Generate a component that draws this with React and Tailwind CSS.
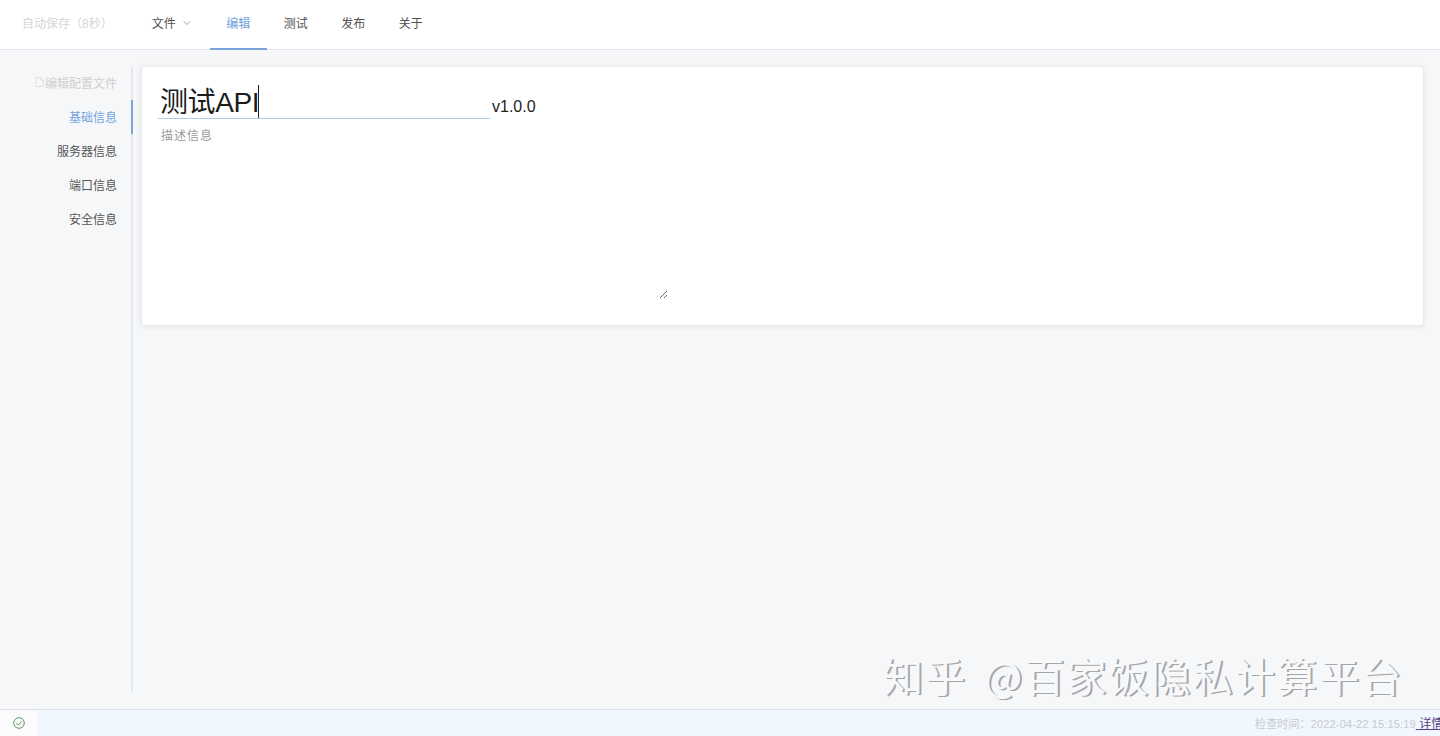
import React from "react";
import { ChevronDown, File } from "lucide-react";

const FONT = "font-['Liberation_Sans','Noto_Sans_CJK_SC',sans-serif]";

function Tab({ children, active }) {
  return (
    <div className={`h-[50px] px-[16.75px] flex items-center text-[12px] border-b-2 ${active ? "text-[#6f9fd8] border-[#7aa5dc]" : "text-[#505050] border-transparent"}`}>
      {children}
    </div>
  );
}

function SideItem({ children, active }) {
  return (
    <div className={`h-[34px] pt-[2px] flex items-center justify-end pr-[14px] text-[12px] -mr-[2px] border-r-2 ${active ? "text-[#74a3dc] border-[#7aa5dc]" : "text-[#555555] border-transparent"}`}>
      {children}
    </div>
  );
}

export default function App() {
  return (
    <div className={`${FONT} w-[1440px] h-[736px] overflow-hidden flex flex-col bg-[#f5f7f9] relative`}>
      <header className="h-[50px] shrink-0 bg-white border-b border-[#e4e7ed] flex items-start">
        <div className="w-[135px] pl-[22px] h-[47px] flex items-center text-[12px] text-[#d6d6d6] whitespace-nowrap">自动保存（8秒）</div>
        <Tab>
          文件
          <ChevronDown className="ml-[5px] mb-[3px] w-[12px] h-[12px] text-[#666]" strokeWidth={1.25} />
        </Tab>
        <Tab active>编辑</Tab>
        <Tab>测试</Tab>
        <Tab>发布</Tab>
        <Tab>关于</Tab>
      </header>

      <main className="flex-1 min-h-0 flex pt-[17px] pb-[17px]">
        <aside className="w-[133px] shrink-0 border-r-2 border-[#e4e7ec]">
          <div className="h-[33px] flex items-center justify-end pr-[14px] text-[12px] text-[#d0d0d0]">
            <File className="w-[11px] h-[12px] mb-[3px] shrink-0" strokeWidth={1.25} />
            编辑配置文件
          </div>
          <SideItem active>基础信息</SideItem>
          <SideItem>服务器信息</SideItem>
          <SideItem>端口信息</SideItem>
          <SideItem>安全信息</SideItem>
        </aside>

        <div className="flex-1 pl-2 pr-4">
          <section className="h-[260px] -mt-[1px] bg-white rounded-[4px] border border-[#e9ebef] shadow-[0_1px_6px_rgba(0,0,0,0.08)] pl-4 pt-[16px]">
            <div className="flex items-end">
              <div className="w-[332px] h-[36px] border-b border-[#a9cdea] pl-[2px] flex items-start">
                <span className="text-[28px] leading-[36px] mt-[2px] tracking-[-0.4px] text-[#1c1c1c]">测试API</span>
                <span className="w-[1px] h-[33px] bg-[#222] -ml-[1px] mt-[2px]" />
              </div>
              <span className="ml-[2px] text-[16px] leading-[24px] text-[#222]">v1.0.0</span>
            </div>
            <textarea
              readOnly
              placeholder="描述信息"
              className="block w-[510px] h-[173px] mt-[7px] pl-[3px] text-[12px] tracking-[1px] leading-[20px] outline-none placeholder:text-[#9a9a9a] resize"
            />
          </section>
        </div>
      </main>

      <div className="absolute left-[883px] top-[648px] text-[40px] leading-[54px] tracking-[2.1px] [word-spacing:6px] whitespace-nowrap font-['Noto_Sans_CJK_SC',sans-serif] text-[#f7f8fa] [text-shadow:2px_1px_0_#a4a6a8]">
        知乎 @百家饭隐私计算平台
      </div>

      <footer className="h-[27px] shrink-0 border-t border-[#dcdfe6] bg-[#f0f7fe] flex items-center overflow-hidden">
        <div className="w-[37px] h-full bg-[#fbfbfb] flex items-center justify-center shrink-0">
          <svg width="12" height="12" viewBox="0 0 12 12" fill="none" stroke="#5c9460" strokeWidth="1">
            <circle cx="6" cy="6" r="5.3" />
            <path d="M3.4 6.1 5.3 8 8.8 4.3" />
          </svg>
        </div>
        <div className="flex-1" />
        <div className="w-[185px] shrink-0 text-[11px] whitespace-nowrap text-[#c8cad0] tracking-[0.15px] pt-[2px]">
          检查时间：2022-04-22 15:15:19
          <span className="underline text-[#5b3f86] text-[12px]"> 详情信息</span>
        </div>
      </footer>
    </div>
  );
}
